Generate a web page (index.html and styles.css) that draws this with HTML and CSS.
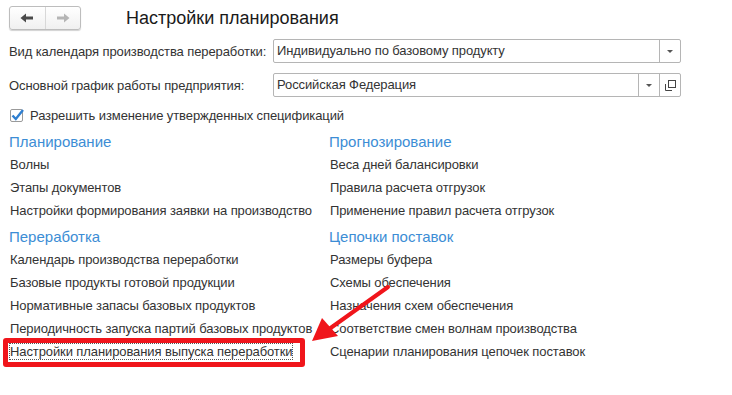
FILE: index.html
```html
<!DOCTYPE html>
<html lang="ru">
<head>
<meta charset="utf-8">
<link rel="stylesheet" href="styles.css">
</head>
<body>
<div class="page">
  <div class="header">
    <div class="nav">
      <button class="navbtn back"><svg width="14" height="10" viewBox="0 0 14 10"><path d="M0.5 5 L6 0.5 L6 3.5 L13 3.5 L13 6.5 L6 6.5 L6 9.5 Z" fill="#4a4a4a"/></svg></button>
      <button class="navbtn fwd"><svg width="14" height="10" viewBox="0 0 14 10"><path d="M13.5 5 L8 0.5 L8 3.5 L1 3.5 L1 6.5 L8 6.5 L8 9.5 Z" fill="#b5b5b5"/></svg></button>
    </div>
    <h1 class="title">Настройки планирования</h1>
  </div>

  <div class="field">
    <span class="label">Вид календаря производства переработки:</span>
    <div class="input">
      <span class="value">Индивидуально по базовому продукту</span>
      <span class="ibtn"><span class="tri"></span></span>
    </div>
  </div>
  <div class="field">
    <span class="label">Основной график работы предприятия:</span>
    <div class="input">
      <span class="value">Российская Федерация</span>
      <span class="ibtn"><span class="tri"></span></span>
      <span class="ibtn"><svg width="11" height="11" viewBox="0 0 11 11"><rect x="3.5" y="0.5" width="7" height="7" fill="none" stroke="#444"/><path d="M0.5 4 V10.5 H7" fill="none" stroke="#444"/></svg></span>
    </div>
  </div>

  <label class="check">
    <span class="box"><svg width="13" height="12" viewBox="0 0 13 12"><path d="M1.5 6.5 L4.8 10 L12 1" fill="none" stroke="#2f7fd0" stroke-width="2.4"/></svg></span>
    <span>Разрешить изменение утвержденных спецификаций</span>
  </label>

  <div class="cols">
    <div class="col">
      <div class="head">Планирование</div>
      <div class="item">Волны</div>
      <div class="item">Этапы документов</div>
      <div class="item">Настройки формирования заявки на производство</div>
      <div class="head">Переработка</div>
      <div class="item">Календарь производства переработки</div>
      <div class="item">Базовые продукты готовой продукции</div>
      <div class="item">Нормативные запасы базовых продуктов</div>
      <div class="item">Периодичность запуска партий базовых продуктов</div>
      <div class="item"><span class="focus">Настройки планирования выпуска переработки</span></div>
    </div>
    <div class="col">
      <div class="head">Прогнозирование</div>
      <div class="item">Веса дней балансировки</div>
      <div class="item">Правила расчета отгрузок</div>
      <div class="item">Применение правил расчета отгрузок</div>
      <div class="head">Цепочки поставок</div>
      <div class="item">Размеры буфера</div>
      <div class="item">Схемы обеспечения</div>
      <div class="item">Назначения схем обеспечения</div>
      <div class="item">Соответствие смен волнам производства</div>
      <div class="item">Сценарии планирования цепочек поставок</div>
    </div>
  </div>

  <div class="redbox"></div>
  <svg class="arrow" width="732" height="395" viewBox="0 0 732 395">
    <line x1="388" y1="287" x2="325" y2="332" stroke="#f0151b" stroke-width="4" stroke-linecap="round"/>
    <path d="M312 341 L322 318 L338 336 Z" fill="#f0151b"/>
  </svg>
</div>
</body>
</html>
```

FILE: styles.css
```css
html, body {
  margin: 0;
  padding: 0;
  background: #fff;
}
.page {
  position: relative;
  width: 732px;
  height: 395px;
  font-family: "Liberation Sans", Arial, sans-serif;
  font-size: 13px;
  letter-spacing: -0.1px;
  color: #333;
  overflow: hidden;
}
.header {
  display: flex;
  align-items: center;
  height: 34px;
  padding-left: 9px;
}
.nav {
  display: flex;
  width: 72px;
  height: 24px;
  box-sizing: border-box;
  border: 1px solid #bdbdbd;
  border-radius: 3px;
  background: linear-gradient(#ffffff, #f0f0f0);
  box-shadow: 0 1px 1px rgba(0,0,0,0.18);
  margin-top: 1px;
}
.navbtn {
  flex: 1;
  border: 0;
  background: transparent;
  padding: 0;
  display: flex;
  align-items: center;
  justify-content: center;
}
.navbtn.back {
  border-right: 1px solid #d8d8d8;
}
.title {
  margin: 0 0 0 45px;
  font-size: 18px;
  font-weight: normal;
  letter-spacing: 0;
  color: #1a1a1a;
  line-height: 22px;
  padding-top: 1px;
}
.field {
  display: flex;
  align-items: center;
  height: 24px;
  margin-top: 5px;
  margin-bottom: 10px;
  padding-left: 9px;
}
.field + .field {
  margin-top: 0;
}
.label {
  width: 264px;
  white-space: nowrap;
}
.input {
  display: flex;
  width: 408px;
  height: 24px;
  box-sizing: border-box;
  border: 1px solid #b5b5b5;
  border-radius: 2px;
  background: #fff;
}
.value {
  flex: 1;
  padding-left: 3px;
  line-height: 22px;
  white-space: nowrap;
}
.ibtn {
  width: 20px;
  border-left: 1px solid #b5b5b5;
  display: flex;
  align-items: center;
  justify-content: center;
}
.tri {
  width: 0;
  height: 0;
  border-left: 3px solid transparent;
  border-right: 3px solid transparent;
  border-top: 3px solid #555;
}
.check {
  display: flex;
  align-items: center;
  height: 18px;
  padding-left: 10px;
  margin-top: -1px;
}
.box {
  width: 13px;
  height: 13px;
  box-sizing: border-box;
  border: 1px solid #9a9a9a;
  border-radius: 2px;
  background: #fff;
  margin-right: 7px;
  position: relative;
}
.box svg {
  position: absolute;
  left: 0;
  top: -1px;
}
.cols {
  display: flex;
  padding-left: 9px;
  margin-top: 3px;
}
.col {
  display: flex;
  flex-direction: column;
  width: 320px;
}
.head {
  height: 26px;
  line-height: 30px;
  font-size: 15px;
  letter-spacing: 0;
  color: #3c8dd5;
}
.item {
  height: 23px;
  line-height: 23px;
  padding-left: 1px;
  white-space: nowrap;
}
.focus {
  outline: 1px dotted #555;
  outline-offset: 0;
}
.redbox {
  position: absolute;
  left: 3px;
  top: 338px;
  width: 292px;
  height: 19px;
  border: 5px solid #f0151b;
  border-radius: 3px;
}
.arrow {
  position: absolute;
  left: 0;
  top: 0;
  pointer-events: none;
}
```
